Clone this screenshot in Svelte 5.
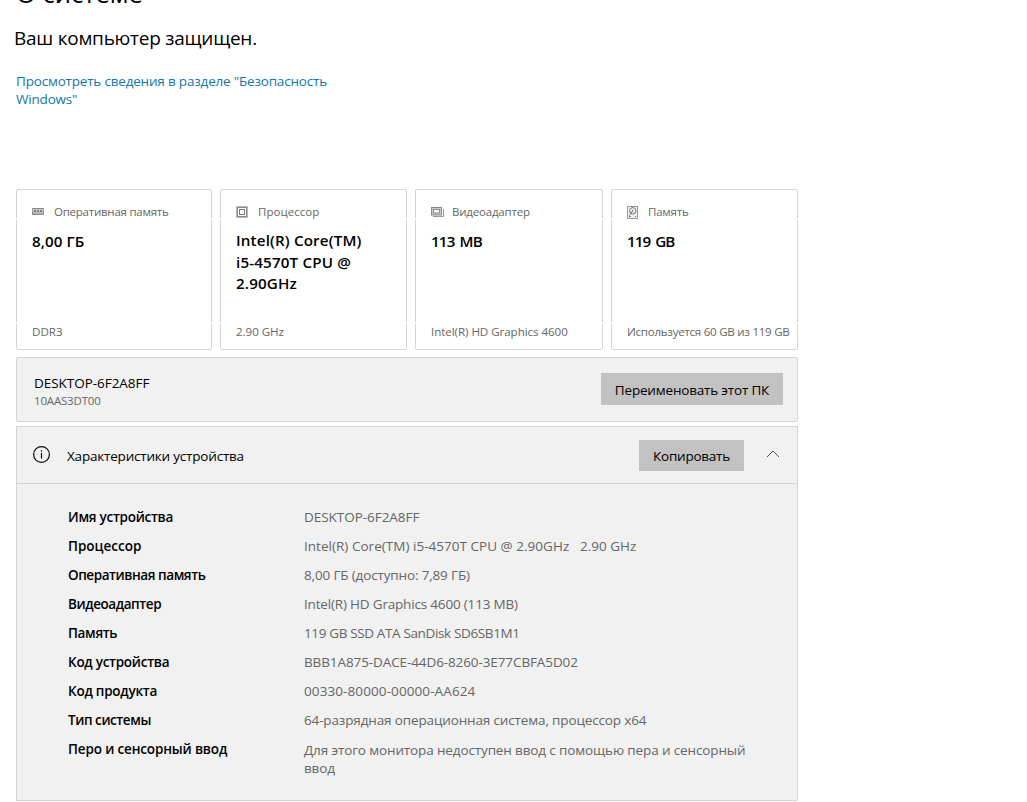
<script>
  const cards = [
    { icon: 'ram', label: 'Оперативная память', labelGap: -0.24, value: '8,00 ГБ', valueGap: 0.05, note: 'DDR3', noteGap: 0 },
    { icon: 'cpu', label: 'Процессор', labelGap: 0.05, value: 'Intel(R) Core(TM) i5-4570T CPU @ 2.90GHz', valueGap: 0.15, note: '2.90 GHz', noteGap: -0.05 },
    { icon: 'gpu', label: 'Видеоадаптер', labelGap: -0.2, value: '113 MB', valueGap: -0.85, note: 'Intel(R) HD Graphics 4600', noteGap: -0.06 },
    { icon: 'disk', label: 'Память', labelGap: -0.2, value: '119 GB', valueGap: -0.95, note: 'Используется 60 GB из 119 GB', noteGap: -0.28 }
  ];

  // term, value, and the letter spacing of each in pixels
  const specs = [
    ['Имя устройства', 'DESKTOP-6F2A8FF', -0.27, -0.04],
    ['Процессор', 'Intel(R) Core(TM) i5-4570T CPU @ 2.90GHz\u00a0\u00a0\u00a02.90 GHz', 0, 0.03],
    ['Оперативная память', '8,00 ГБ (доступно: 7,89 ГБ)', -0.43, -0.15],
    ['Видеоадаптер', 'Intel(R) HD Graphics 4600 (113 MB)', -0.42, -0.18],
    ['Память', '119 GB SSD ATA SanDisk SD6SB1M1', -0.35, -0.36],
    ['Код устройства', 'BBB1A875-DACE-44D6-8260-3E77CBFA5D02', -0.27, -0.1],
    ['Код продукта', '00330-80000-00000-AA624', -0.24, 0.1],
    ['Тип системы', '64-разрядная операционная система, процессор x64', -0.44, -0.14],
    ['Перо и сенсорный ввод', 'Для этого монитора недоступен ввод с помощью пера и сенсорный ввод', -0.15, -0.13]
  ];
</script>

<main class="page">
  <h1>О системе</h1>
  <p class="status">Ваш компьютер защищен.</p>
  <a class="link" href="#security">Просмотреть сведения в разделе "Безопасность Windows"</a>

  <section class="cards">
    {#each cards as card}
      <article class="card {card.icon}">
        <header>
          <span class="glyph">
            {#if card.icon === 'ram'}
              <svg width="12" height="8" viewBox="0 0 12 8"><path d="M.5.5h11v1.700q-.8.5 0 1V6.500h-11V3.200q.8-.5 0-1z" fill="#ccc" stroke="#888" /><path d="M2 3h2M5 3h2M8 3h2" stroke="#666" stroke-width="1.500" /><path d="M1.500 5h9" stroke="#777" stroke-dasharray="1 1" /></svg>
            {:else if card.icon === 'cpu'}
              <svg width="12" height="12" viewBox="0 0 12 12" fill="none"><rect x=".5" y=".5" width="11" height="11" stroke="#777" stroke-dasharray="1 1" /><rect x="1.500" y="1.500" width="9" height="9" stroke="#888" /><rect x="3.500" y="3.500" width="5" height="5" stroke="#777" /></svg>
            {:else if card.icon === 'gpu'}
              <svg width="13" height="10" viewBox="0 0 13 10" fill="none"><path d="M2 9.500h10.500V2" stroke="#999" /><rect x=".5" y=".5" width="10" height="7.500" stroke="#888" fill="#ccc" /><rect x="2.500" y="2.500" width="6" height="3.500" stroke="#888" fill="#fff" /></svg>
            {:else}
              <svg width="11" height="13" viewBox="0 0 11 13" fill="none"><rect x=".5" y=".5" width="10" height="12" stroke="#999" fill="#eee" /><circle cx="5.800" cy="4.800" r="3.200" stroke="#777" /><circle cx="5.800" cy="4.800" r=".8" fill="#777" /><path d="M5.500 5 2.500 9.500M2 10.500h2M8 10.500h1" stroke="#777" /></svg>
            {/if}
          </span>
          <span style:letter-spacing="{card.labelGap}px">{card.label}</span>
        </header>
        <strong style:letter-spacing="{card.valueGap}px">{card.value}</strong>
        <small style:letter-spacing="{card.noteGap}px">{card.note}</small>
      </article>
    {/each}
  </section>

  <section class="device">
    <div>
      <div class="name">DESKTOP-6F2A8FF</div>
      <div class="model">10AAS3DT00</div>
    </div>
    <button class="rename">Переименовать этот ПК</button>
  </section>

  <section class="details">
    <header class="bar">
      <svg class="info" width="18" height="18" viewBox="0 0 18 18" fill="none" stroke="#111"><circle cx="8.500" cy="8.500" r="7.900" stroke-width="1.200" /><path d="M8.500 7v5.500M8.500 4.300v1.400" stroke-width="1.200" /></svg>
      <h2>Характеристики устройства</h2>
      <button class="copy">Копировать</button>
      <svg class="chevron" width="14" height="8" viewBox="0 0 14 8" fill="none" stroke="#555"><path d="m1 7 6-6 6 6" /></svg>
    </header>
    <dl>
      {#each specs as [term, value, termGap, valueGap]}
        <div class="row">
          <dt style:letter-spacing="{termGap}px">{term}</dt>
          <dd style:letter-spacing="{valueGap}px">{value}</dd>
        </div>
      {/each}
    </dl>
  </section>
</main>

<style>
  :global(body) { background: #fff; overflow: hidden; }
  .page { box-sizing: border-box; width: 798px; height: 802px; overflow: hidden; padding-left: 16px; font: 13.5px/18px "Open Sans", "Noto Sans", sans-serif; color: #000; }
  h1 { margin: -23px 0 0; font-size: 25.600px; line-height: 34px; font-weight: 400; }
  .status { margin: 13px 0 0 -2px; font-size: 19px; line-height: 28px; letter-spacing: -0.250px; }
  .link { display: block; width: 330px; margin-top: 20px; color: #1377ab; text-decoration: none; letter-spacing: -0.190px; }
  .cards { display: grid; grid-template-columns: 196px 187px 188px 187px; gap: 8px; margin-top: 81px; }
  .card { position: relative; box-sizing: border-box; height: 161px; padding: 13px 0 8px 15px; border: 1px solid #d5d5d5; border-radius: 2px; display: flex; flex-direction: column; white-space: nowrap; }
  /* Breaks in the side borders, beside the label and above the note */
  .card::before, .card::after { content: ""; position: absolute; left: -1px; right: -1px; height: 2px; border: solid #f6f6f6; border-width: 0 1px; }
  .card::before { top: 28px; }
  .card::after { top: 132px; }
  .card header { display: flex; align-items: center; height: 18px; font-size: 11.500px; color: #666; }
  .glyph { display: flex; width: 22px; }
  .gpu .glyph, .disk .glyph { width: 21px; }
  .glyph svg { display: block; }
  strong { font-size: 15.200px; line-height: 21.500px; font-weight: 600; color: #000; margin-top: 10px; white-space: normal; width: 140px; }
  .cpu strong { margin-top: 9px; }
  .gpu strong, .disk strong { word-spacing: 2px; }
  small { margin-top: auto; font-size: 11.600px; line-height: 18px; color: #666; }
  .device { box-sizing: border-box; height: 65px; margin-top: 7px; padding: 15px 14px 0 17px; display: flex; align-items: flex-start; justify-content: space-between; background: #f1f1f1; border: 1px solid #d5d5d5; border-radius: 2px; }
  .name { margin-top: 1px; letter-spacing: -0.040px; }
  .model { margin-top: 1px; font-size: 11.500px; line-height: 16px; color: #666; letter-spacing: -0.180px; }
  button { border: 0; padding: 0; background: #c2c2c2; color: #000; font: 13.500px/18px "Open Sans", "Noto Sans", sans-serif; }
  .rename { width: 182px; height: 32px; padding-top: 1px; letter-spacing: -0.180px; }
  .details { box-sizing: border-box; height: 375px; margin-top: 4px; background: #f1f1f1; border: 1px solid #d5d5d5; }
  .bar { box-sizing: border-box; display: flex; align-items: center; height: 57px; padding: 0 17px 0 16px; border-bottom: 1px solid #d5d5d5; }
  h2 { margin: 2px 0 0 16px; font-size: 13.500px; font-weight: 400; letter-spacing: -0.200px; }
  .copy { width: 105px; height: 31px; margin-left: auto; padding-top: 2px; letter-spacing: -0.250px; }
  .chevron { margin: -3px 0 0 22px; }
  dl { margin: 0; padding: 24px 0 0 51px; }
  .row { display: flex; height: 29px; }
  dt { width: 236px; font-weight: 600; color: #000; }
  dd { margin: 0; width: 455px; color: #666; }
  .row:last-child dd { margin-top: 1px; }
</style>
